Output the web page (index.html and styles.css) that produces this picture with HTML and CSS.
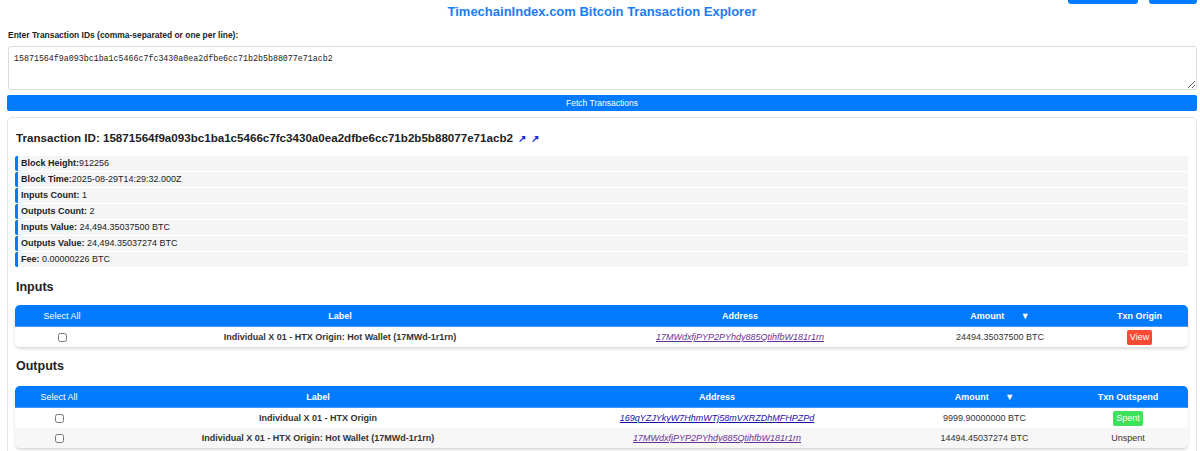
FILE: index.html
```html
<!DOCTYPE html>
<html>
<head>
<meta charset="utf-8">
<link rel="stylesheet" href="styles.css">
</head>
<body>
<div class="top-actions">
  <button class="top-btn top-btn-a"></button>
  <button class="top-btn top-btn-b"></button>
</div>
<h1 class="title">TimechainIndex.com Bitcoin Transaction Explorer</h1>
<label class="input-label">Enter Transaction IDs (comma-separated or one per line):</label>
<textarea class="txids">15871564f9a093bc1ba1c5466c7fc3430a0ea2dfbe6cc71b2b5b88077e71acb2</textarea>
<button class="fetch-btn">Fetch Transactions</button>

<div class="card">
  <h2 class="tx-title">Transaction ID: 15871564f9a093bc1ba1c5466c7fc3430a0ea2dfbe6cc71b2b5b88077e71acb2 <a class="ext" href="#">&#x2197;</a> <a class="ext" href="#">&#x2197;</a></h2>
  <div class="details">
    <div class="detail"><b>Block Height:</b>912256</div>
    <div class="detail"><b>Block Time:</b>2025-08-29T14:29:32.000Z</div>
    <div class="detail"><b>Inputs Count:</b> 1</div>
    <div class="detail"><b>Outputs Count:</b> 2</div>
    <div class="detail"><b>Inputs Value:</b> 24,494.35037500 BTC</div>
    <div class="detail"><b>Outputs Value:</b> 24,494.35037274 BTC</div>
    <div class="detail"><b>Fee:</b> 0.00000226 BTC</div>
  </div>

  <h3 class="section">Inputs</h3>
  <table class="io-table">
    <colgroup><col style="width:94px"><col style="width:462px"><col style="width:338px"><col style="width:182px"><col></colgroup>
    <thead>
      <tr><th class="sel">Select All</th><th>Label</th><th>Address</th><th>Amount <span class="sort">&#x25BC;</span></th><th>Txn Origin</th></tr>
    </thead>
    <tbody>
      <tr>
        <td><input type="checkbox" class="cb"></td>
        <td class="lbl">Individual X 01 - HTX Origin: Hot Wallet (17MWd-1r1rn)</td>
        <td><a class="addr visited" href="#">17MWdxfjPYP2PYhdy885QtihfbW181r1rn</a></td>
        <td>24494.35037500 BTC</td>
        <td><span class="badge view">View</span></td>
      </tr>
    </tbody>
  </table>

  <h3 class="section section-out">Outputs</h3>
  <table class="io-table">
    <colgroup><col style="width:88px"><col style="width:430px"><col style="width:368px"><col style="width:167px"><col></colgroup>
    <thead>
      <tr><th class="sel">Select All</th><th>Label</th><th>Address</th><th>Amount <span class="sort">&#x25BC;</span></th><th>Txn Outspend</th></tr>
    </thead>
    <tbody>
      <tr>
        <td><input type="checkbox" class="cb"></td>
        <td class="lbl">Individual X 01 - HTX Origin</td>
        <td><a class="addr" href="#">169qYZJYkyW7HhmWTj58mVXRZDhMFHPZPd</a></td>
        <td>9999.90000000 BTC</td>
        <td><span class="badge spent">Spent</span></td>
      </tr>
      <tr class="alt">
        <td><input type="checkbox" class="cb"></td>
        <td class="lbl">Individual X 01 - HTX Origin: Hot Wallet (17MWd-1r1rn)</td>
        <td><a class="addr visited" href="#">17MWdxfjPYP2PYhdy885QtihfbW181r1rn</a></td>
        <td>14494.45037274 BTC</td>
        <td>Unspent</td>
      </tr>
    </tbody>
  </table>
</div>
</body>
</html>
```

FILE: styles.css
```css
html, body {
  margin: 0;
  background: #fff;
}
body {
  padding: 0 3px 0 7px;
  font-family: "Liberation Sans", Arial, sans-serif;
  color: #222;
  position: relative;
  font-size: 9px;
}
.top-actions {
  position: absolute;
  top: -20px;
  right: 3px;
  display: flex;
  gap: 11px;
}
.top-btn {
  border: none;
  background: #007bff;
  border-radius: 3px;
  height: 24px;
  padding: 0;
}
.top-btn-a { width: 70px; }
.top-btn-b { width: 48px; }
.title {
  margin: 0;
  padding-top: 3px;
  text-align: center;
  color: #1a7cf2;
  font-size: 13px;
  line-height: 17px;
  font-weight: bold;
}
.input-label {
  display: block;
  margin: 10px 0 0 1px;
  font-weight: bold;
  font-size: 8.45px;
  line-height: 11px;
  color: #222;
}
.txids {
  display: block;
  box-sizing: border-box;
  width: calc(100% - 1px);
  margin: 5px 0 0 1px;
  height: 44px;
  border: 1px solid #dcdcdc;
  border-radius: 3px;
  padding: 7px 5px 5px;
  font-family: "Liberation Mono", "DejaVu Sans Mono", monospace;
  font-size: 8.3px;
  line-height: 10px;
  color: #222;
  resize: vertical;
}
.fetch-btn {
  display: block;
  width: 100%;
  height: 16px;
  margin-top: 5px;
  border: none;
  border-radius: 2px;
  background: #007bff;
  color: #fff;
  font-family: "Liberation Sans", Arial, sans-serif;
  font-size: 8.5px;
  padding: 0;
}
.card {
  margin-top: 6px;
  border: 1px solid #e3e3e3;
  border-radius: 5px;
  padding: 12px 8px 8px 7px;
}
.tx-title {
  margin: 0 0 9px 1px;
  font-size: 11.6px;
  line-height: 16px;
  font-weight: bold;
  color: #222;
}
.ext {
  color: #1e28e0;
  text-decoration: none;
  font-size: 10px;
  font-weight: bold;
  margin-left: 2px;
}
.details {
  display: flex;
  flex-direction: column;
}
.detail {
  height: 15px;
  line-height: 15px;
  margin-bottom: 1px;
  background: #f5f5f5;
  border-left: 3px solid #007bff;
  border-radius: 2px 0 0 2px;
  padding-left: 3px;
  font-size: 9px;
  color: #222;
}
.section {
  margin: 11px 0 10px 1px;
  font-size: 12.5px;
  line-height: 16px;
  font-weight: bold;
  color: #222;
}
.section-out {
  margin-bottom: 12px;
}
.io-table {
  width: 100%;
  table-layout: fixed;
  border-collapse: separate;
  border-spacing: 0;
  border-radius: 5px;
  overflow: hidden;
  box-shadow: 0 2px 3px rgba(0,0,0,0.15);
  font-size: 9px;
}
.io-table th {
  background: #007bff;
  color: #fff;
  font-weight: bold;
  height: 21px;
  padding: 0;
  text-align: center;
  border-bottom: 1px solid #3f9bff;
}
.io-table th.sel { font-weight: normal; }
.sort { margin-left: 14px; font-size: 9px; }
.io-table td {
  height: 20px;
  padding: 0;
  text-align: center;
  color: #333;
  background: #fff;
}
.io-table tr.alt td { background: #f7f7f7; }
.lbl { font-weight: bold; color: #222; }
.cb {
  margin: 0;
  width: 9px;
  height: 9px;
  vertical-align: middle;
}
.addr {
  font-style: italic;
  color: #1a0dab;
  text-decoration: underline;
}
.addr.visited { color: #6a2f92; }
.badge {
  display: inline-block;
  color: #fff;
  padding: 2px 3px;
  border-radius: 2px;
  line-height: 11px;
}
.badge.view { background: #fb4a33; }
.badge.spent { background: #3de25a; }
```
